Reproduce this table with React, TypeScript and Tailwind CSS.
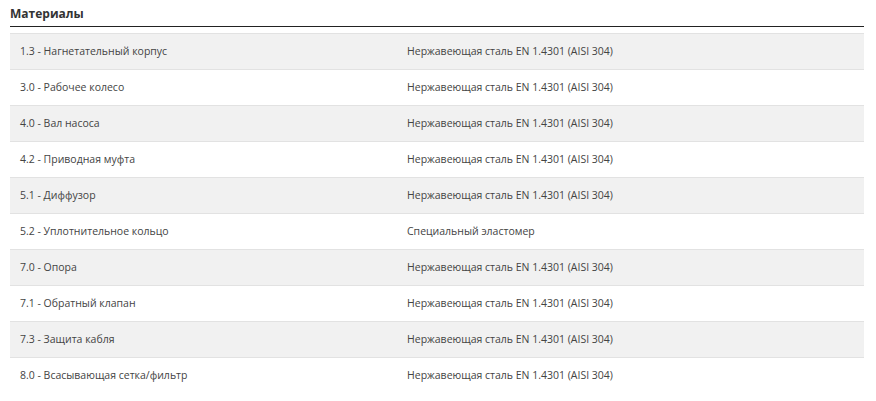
import React from "react";

const rows: [string, string][] = [
  ["1.3 - Нагнетательный корпус", "Нержавеющая сталь EN 1.4301 (AISI 304)"],
  ["3.0 - Рабочее колесо", "Нержавеющая сталь EN 1.4301 (AISI 304)"],
  ["4.0 - Вал насоса", "Нержавеющая сталь EN 1.4301 (AISI 304)"],
  ["4.2 - Приводная муфта", "Нержавеющая сталь EN 1.4301 (AISI 304)"],
  ["5.1 - Диффузор", "Нержавеющая сталь EN 1.4301 (AISI 304)"],
  ["5.2 - Уплотнительное кольцо", "Специальный эластомер"],
  ["7.0 - Опора", "Нержавеющая сталь EN 1.4301 (AISI 304)"],
  ["7.1 - Обратный клапан", "Нержавеющая сталь EN 1.4301 (AISI 304)"],
  ["7.3 - Защита кабля", "Нержавеющая сталь EN 1.4301 (AISI 304)"],
  ["8.0 - Всасывающая сетка/фильтр", "Нержавеющая сталь EN 1.4301 (AISI 304)"],
];

export default function App() {
  return (
    <div className="w-[876px] h-[401px] bg-white px-[10px] pt-[6px]" style={{ fontFamily: '"Open Sans", sans-serif' }}>
      <div className="w-[854px]">
        <h2 className="text-[12px] font-bold text-[#333] leading-[16px] pb-[4px] border-b border-[#222]">Материалы</h2>
        <div className="mt-[6px]">
          {rows.map(([a, b], i) => (
            <div
              key={i}
              className={`flex h-[36px] items-center border-t border-[#e2e2e2] text-[10.5px] text-[#444] ${i % 2 === 0 ? "bg-[#f1f1f1]" : "bg-white"}`}
            >
              <div className="w-[387px] pl-[10px]">{a}</div>
              <div className="pl-[10px]">{b}</div>
            </div>
          ))}
        </div>
      </div>
    </div>
  );
}
